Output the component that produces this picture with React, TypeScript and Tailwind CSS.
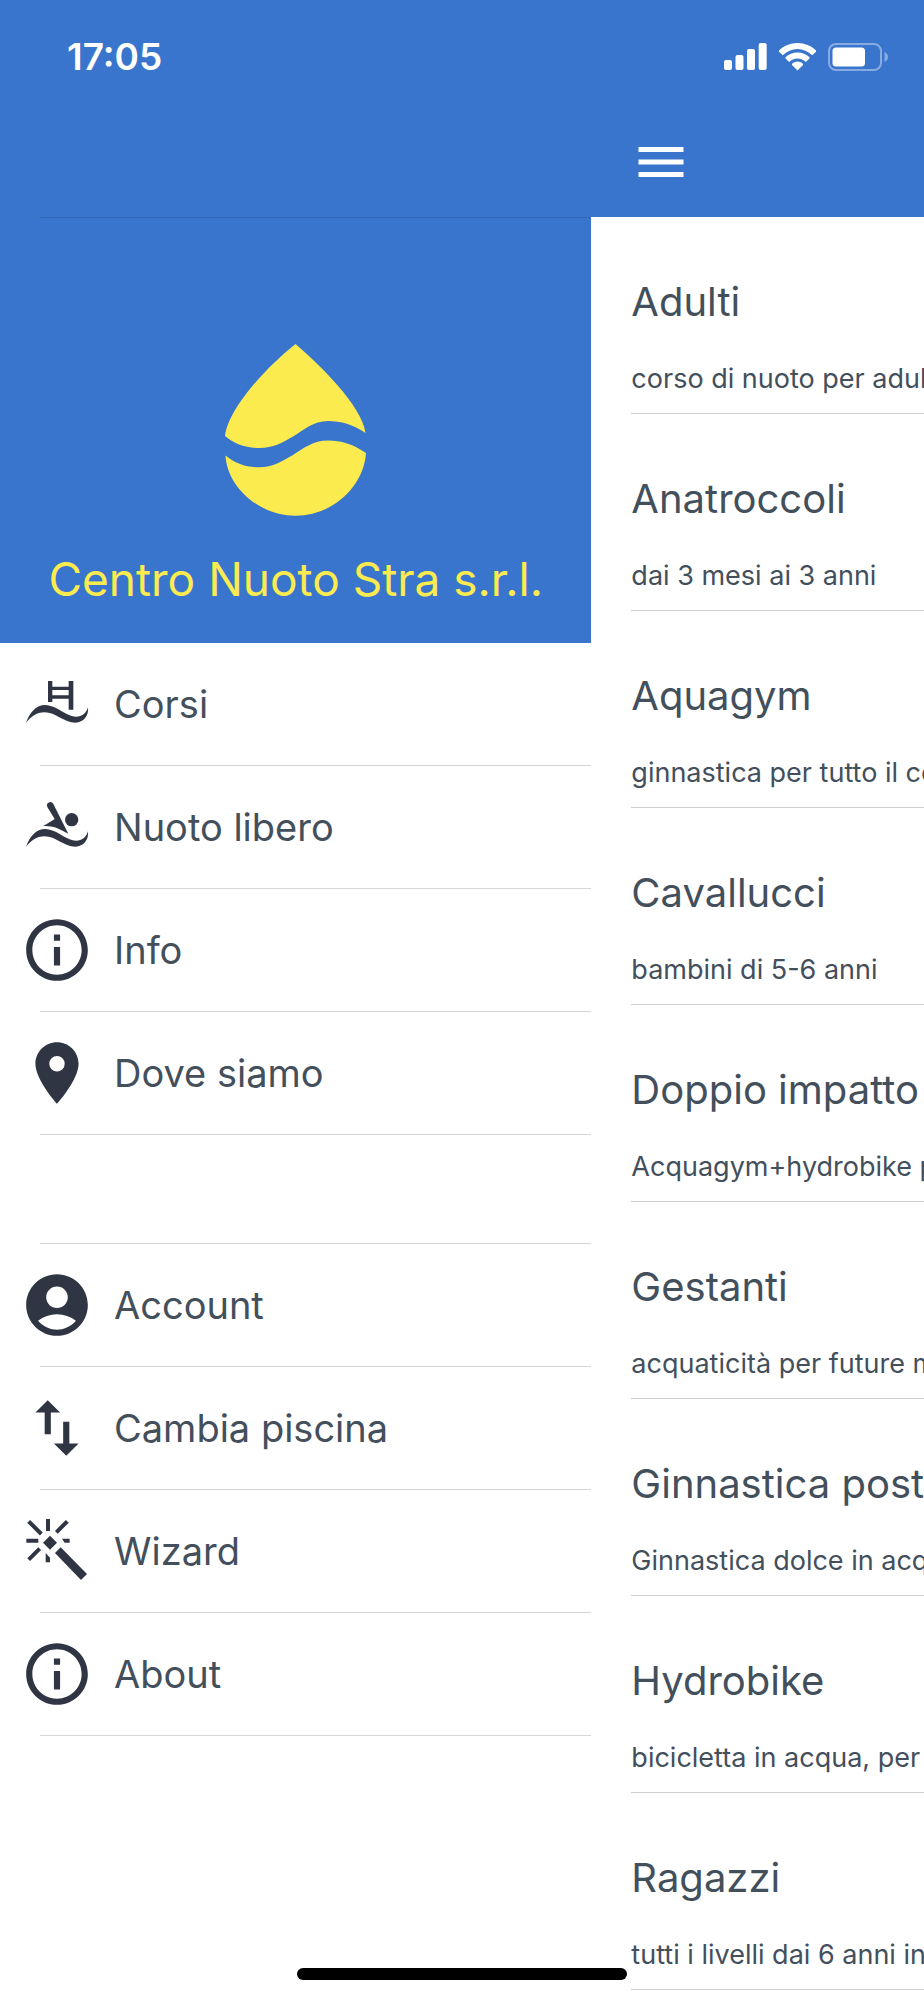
import type { ReactNode } from 'react'
import { MdAccountCircle, MdImportExport, MdInfoOutline, MdMenu, MdPlace } from 'react-icons/md'

// ============================================
// DATA
// ============================================

type MenuEntry = {
  name: string
  href: string
  icon: ReactNode
}

const iconClass = 'w-[74px] h-[74px] shrink-0 text-[#2f3542]'

const mainLinks: MenuEntry[] = [
  { name: 'Corsi', href: '#corsi', icon: <PoolIcon /> },
  { name: 'Nuoto libero', href: '#nuoto-libero', icon: <SwimmerIcon /> },
  { name: 'Info', href: '#info', icon: <MdInfoOutline className={iconClass} /> },
  { name: 'Dove siamo', href: '#dove-siamo', icon: <MdPlace className={iconClass} /> },
]

const settingsLinks: MenuEntry[] = [
  { name: 'Account', href: '#account', icon: <MdAccountCircle className={iconClass} /> },
  { name: 'Cambia piscina', href: '#cambia-piscina', icon: <MdImportExport className={iconClass} /> },
  { name: 'Wizard', href: '#wizard', icon: <WizardIcon /> },
  { name: 'About', href: '#about', icon: <MdInfoOutline className={iconClass} /> },
]

const courses = [
  { title: 'Adulti', text: 'corso di nuoto per adulti' },
  { title: 'Anatroccoli', text: 'dai 3 mesi ai 3 anni' },
  { title: 'Aquagym', text: 'ginnastica per tutto il corpo' },
  { title: 'Cavallucci', text: 'bambini di 5-6 anni' },
  { title: 'Doppio impatto', text: 'Acquagym+hydrobike per tutti' },
  { title: 'Gestanti', text: 'acquaticità per future mamme' },
  { title: 'Ginnastica posturale', text: 'Ginnastica dolce in acqua' },
  { title: 'Hydrobike', text: 'bicicletta in acqua, per tutti' },
  { title: 'Ragazzi', text: 'tutti i livelli dai 6 anni in su' },
]

// ============================================
// ICONS
// ============================================

const WAVE =
  'M18 167C30 136 48 114 76 114C104 114 130 140 155 147C178 153 197 145 204 121C207 146 191 167 166 167C132 167 106 136 74 136C48 136 34 150 18 167Z'

function PoolIcon() {
  return (
    <svg className={iconClass} viewBox="0 0 222 222" fill="currentColor" aria-hidden="true">
      <path d="M84 42h13v17h49V42h14v86h-14V95H97v10H84zM97 69v16h49V69z" fillRule="evenodd" />
      <path d={WAVE} />
    </svg>
  )
}

function SwimmerIcon() {
  return (
    <svg className={iconClass} viewBox="0 0 222 222" fill="currentColor" aria-hidden="true">
      <circle cx="155" cy="89" r="20" />
      <path d="M82 51A9.5 9.5 0 0 1 100 42L145 131C125 121 105 106 69 108C86 100 95 92 104 87Z" />
      <path d={WAVE} transform="translate(0 3)" />
    </svg>
  )
}

function WizardIcon() {
  return (
    <svg className={iconClass} viewBox="0 0 222 222" fill="currentColor" aria-hidden="true">
      <path
        d="M84 15V51M19 80H55M26 22L64 60M142 22L109 55M59 104L26 137"
        stroke="currentColor"
        strokeWidth="12"
      />
      <path d="M126 74H149V86H134ZM77 117L90 131V145H77Z" />
      <path d="M90 65L111 86L90 107L69 86Z" />
      <path d="M122 100L201 180L183 198L105 117Z" />
    </svg>
  )
}

function DropLogo() {
  return (
    <svg className="w-[141px] h-[172px]" viewBox="0 0 141 172" fill="currentColor" aria-hidden="true">
      <path d="M70.5 0C95 21 137 62 140.500 89C128 80.500 116 77 103 77C88 77 79 86 68 92.500C57 99 48 104 34.500 104C21 104 9 100 0 92C3 66 38 26 70.500 0Z" />
      <path d="M.5 111.500C10 119.500 21 123.300 34.500 123.300C48 123.300 57 117 68 111C79 104 88 96.500 103 96.500C116 96.500 128 100 141 109C139 141 109 171.700 70.500 171.700C33 171.700 2 142 .5 111.500Z" />
    </svg>
  )
}

function SignalIcon() {
  return (
    <svg className="w-[43px] h-7" viewBox="0 0 43 28" fill="currentColor" aria-hidden="true">
      <rect x="0" y="17" width="8" height="10" rx="2" />
      <rect x="11.5" y="12" width="8" height="15" rx="2" />
      <rect x="23" y="6" width="8" height="21" rx="2" />
      <rect x="34.7" y="0" width="8" height="27" rx="2" />
    </svg>
  )
}

function WifiIcon() {
  return (
    <svg className="w-[37px] h-7" viewBox="0 0 37 28" fill="currentColor" aria-hidden="true">
      <path d="M18.500 0C25.700 0 32.200 2.800 37 7.500V8.800L33.200 12.300C29.300 8.300 24.200 6 18.500 6S7.700 8.300 3.800 12.300L0 8.800V7.500C4.800 2.800 11.300 0 18.500 0Z" />
      <path d="M18.500 9.400C23.200 9.400 27.400 11.300 30.500 14.300V15.500L26.800 19C24.600 16.800 21.700 15.400 18.500 15.400S12.400 16.800 10.200 19L6.500 15.500V14.300C9.600 11.300 13.800 9.400 18.500 9.400Z" />
      <path d="M18.500 18.600C20.700 18.600 22.600 19.500 24 20.900V22L18.500 27.500L13 22V20.900C14.400 19.500 16.300 18.600 18.500 18.600Z" />
    </svg>
  )
}

function BatteryIcon() {
  return (
    <svg className="w-[60px] h-7" viewBox="0 0 60 28" aria-hidden="true">
      <rect x="1" y="1" width="52" height="26" rx="7" fill="none" stroke="white" strokeOpacity="0.4" strokeWidth="2" />
      <path d="M56.500 9C58.500 9.800 60 11.700 60 14S58.500 18.200 56.500 19Z" fill="white" fillOpacity="0.4" />
      <rect x="4.5" y="4.5" width="32.5" height="19" rx="3.5" fill="white" />
    </svg>
  )
}

// ============================================
// DRAWER
// ============================================

function MenuItem({ name, href, icon }: MenuEntry) {
  return (
    <li>
      <a href={href} className="flex items-center h-[122px] pl-5 gap-5 text-[38px] text-[#444f5c]">
        {icon}
        {name}
      </a>
      <div className="ml-10 h-px bg-[#d6d6d6]" />
    </li>
  )
}

function Drawer() {
  return (
    <aside className="w-[64%] shrink-0 bg-white">
      <div className="bg-[#3975cd] text-[#fbeb4f]">
        <div className="ml-10 h-px bg-[#3569b6]" />
        <div className="flex flex-col items-center pt-[126px] pb-8 gap-8">
          <DropLogo />
          <h1 className="text-[46px] leading-[63px] whitespace-nowrap">Centro Nuoto Stra s.r.l.</h1>
        </div>
      </div>
      <nav>
        <ul>
          {mainLinks.map((link) => (
            <MenuItem key={link.name} {...link} />
          ))}
        </ul>
        <div className="ml-10 h-[109px] border-b border-[#d6d6d6]" />
        <ul>
          {settingsLinks.map((link) => (
            <MenuItem key={link.name} {...link} />
          ))}
        </ul>
      </nav>
    </aside>
  )
}

// ============================================
// PAGE
// ============================================

export default function App() {
  return (
    <div className="min-h-screen overflow-hidden bg-white font-['Inter',sans-serif]">
      <header className="bg-[#3975cd] text-white">
        {/* Status bar */}
        <div className="flex items-center justify-between h-[108px] pt-1.5 pl-[67px] pr-9">
          <span className="text-[37px] leading-10 font-semibold">17:05</span>
          <div className="flex items-center gap-3">
            <SignalIcon />
            <WifiIcon />
            <BatteryIcon />
          </div>
        </div>

        {/* Toolbar */}
        <div className="flex items-center h-[109px] pb-0.5 pl-[64%]">
          <button type="button" aria-label="Menu" className="ml-10">
            <MdMenu className="w-[60px] h-[60px]" />
          </button>
        </div>
      </header>

      <div className="flex">
        <Drawer />
        <main className="flex-1 min-w-0 overflow-hidden pl-10 text-[#444f5c]">
          <ul>
            {courses.map((course) => (
              <li key={course.title} className="border-b border-[#d0d0d0] pt-[61px] pb-[18px] whitespace-nowrap">
                <h2 className="text-[40px] leading-[48px]">{course.title}</h2>
                <p className="mt-[37px] text-[27px] leading-8">{course.text}</p>
              </li>
            ))}
          </ul>
        </main>
      </div>

      {/* Home indicator */}
      <div className="fixed bottom-5 left-1/2 -translate-x-1/2 w-[330px] h-3 rounded-full bg-black" />
    </div>
  )
}
